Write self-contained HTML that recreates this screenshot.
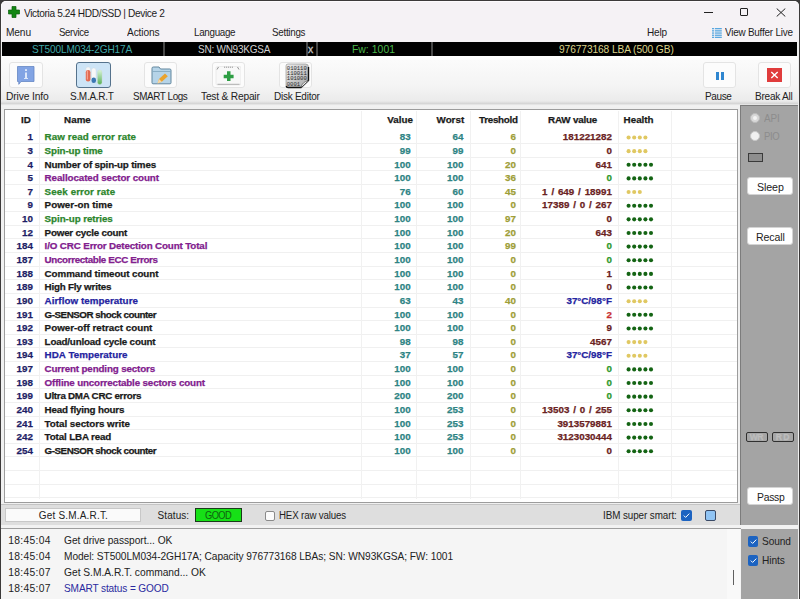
<!DOCTYPE html>
<html><head><meta charset="utf-8">
<style>
*{margin:0;padding:0;box-sizing:border-box}
html,body{width:800px;height:599px;overflow:hidden;background:#3c3a3a}
body{position:relative;font-family:"Liberation Sans",sans-serif;color:#1a1a1a}
.a{position:absolute}
.t{position:absolute;white-space:pre;line-height:1}
.tb{-webkit-text-stroke:0.25px currentColor}
#win{position:absolute;left:1px;top:1px;width:797.5px;height:598px;background:#f0f0f0;border-radius:5px 5px 0 0;overflow:hidden}
#title{position:absolute;left:1px;top:1px;width:797.5px;height:41px;background:#f5f2f5;border-radius:5px 5px 0 0;border-top:1px solid #fdfbfd;border-left:1px solid #fbf9fb}
#bar{position:absolute;left:2px;top:42px;width:795px;height:14px;background:#000}
.sep{position:absolute;top:42px;width:2px;height:14px;background:#474747}
#tb{position:absolute;left:1px;top:56px;width:797px;height:51px;background:linear-gradient(#ffffff 0,#fbfbfb 4px,#f4f4f4 30px,#ebebeb 45px,#d6d6d6 47.5px,#d9d9d9 48px,#efefef 49px,#f2f2f2 51px)}
.btn{position:absolute;top:62px;height:26px;background:#fcfcfc;border:1px solid #e4e4e4;border-radius:3px}
#mid{position:absolute;left:1px;top:107px;width:740px;height:400px;background:#f0f0f0}
#tbl{position:absolute;left:4px;top:109px;width:734px;height:394px;background:#fff;border:1px solid #9c9c9c}
.hl{left:5px;width:732px;height:1px;background:#f0f0f0}
.vl{top:111px;width:1px;height:388px;background:#f1f1f1}
.dots{position:absolute;left:625px;height:4px;line-height:0;font-size:0}
.dot{display:inline-block;width:3.7px;height:3.7px;border-radius:50%;margin-right:1.8px;vertical-align:top}
.y .dot{background:#ebcf6c}
.gd .dot{background:#116611}
#rp{position:absolute;left:740px;top:105px;width:57.5px;height:420px;background:#a4a4a4;border-left:1px solid #7c7c7c;border-top:1px solid #7c7c7c}
#rp2{position:absolute;left:740px;top:529px;width:57.5px;height:70px;background:#a4a4a4;border-left:1px solid #7c7c7c}
.wb{position:absolute;left:747px;width:45.5px;height:18px;background:#fff;border:1px solid #d4d4d4;border-radius:3px}
#sb{position:absolute;left:1px;top:504px;width:739px;height:21px;background:#dedede;border-top:1px solid #c4c4c4}
#sep2{position:absolute;left:1px;top:525px;width:797px;height:4px;background:#f2f2f2}
#log{position:absolute;left:1px;top:528px;width:740px;height:71px;background:#f5f5f5;border-top:1px solid #9e9e9e}
.cb{position:absolute;width:10.5px;height:10.5px;border-radius:2px;background:#1c63c1}
</style></head><body>
<div id="win"></div>
<div id="title"></div>
<!-- title bar icons -->
<svg class="a" style="left:8px;top:6px" width="12" height="12" viewBox="0 0 12 12"><path d="M4 0.5H8V4H11.5V8H8V11.5H4V8H0.5V4H4Z" fill="#138613" stroke="#0b5e0b" stroke-width="0.7" stroke-linejoin="round"/></svg>
<div class="a" style="left:703.5px;top:12px;width:9px;height:1px;background:#222"></div>
<div class="a" style="left:740px;top:8px;width:8px;height:8px;border:1px solid #222;border-radius:1px"></div>
<svg class="a" style="left:776px;top:8px" width="10" height="9" viewBox="0 0 10 9"><path d="M0.7 0.5L9.3 8.5M9.3 0.5L0.7 8.5" stroke="#222" stroke-width="1"/></svg>
<!-- view buffer icon -->
<svg class="a" style="left:712px;top:28px" width="10" height="10" viewBox="0 0 10 10"><g fill="#5aa8e0"><rect x="0" y="0" width="2" height="1.3"/><rect x="2.8" y="0" width="7" height="1.3"/><rect x="0" y="2.2" width="2" height="1.3"/><rect x="2.8" y="2.2" width="7" height="1.3"/><rect x="0" y="4.4" width="2" height="1.3"/><rect x="2.8" y="4.4" width="7" height="1.3"/><rect x="0" y="6.6" width="2" height="1.3"/><rect x="2.8" y="6.6" width="7" height="1.3"/><rect x="0" y="8.7" width="2" height="1.3"/><rect x="2.8" y="8.7" width="7" height="1.3"/></g></svg>
<div id="bar"></div>
<div class="sep" style="left:162.5px"></div>
<div class="sep" style="left:305.5px"></div>
<div class="sep" style="left:315.5px"></div>
<div class="sep" style="left:430.5px"></div>
<div id="tb"></div>
<!-- toolbar buttons -->
<div class="btn" style="left:9px;width:34px"></div>
<div class="btn" style="left:76px;width:35px;top:62px;height:26px;background:#cde4f6;border:1.2px solid #55728c"></div>
<div class="btn" style="left:144px;width:33px"></div>
<div class="btn" style="left:211.5px;width:33.5px"></div>
<div class="btn" style="left:279px;width:33px"></div>
<div class="btn" style="left:703px;width:33px"></div>
<div class="btn" style="left:757.5px;width:33px"></div>
<!-- drive info icon -->
<svg class="a" style="left:17px;top:66px" width="18" height="19" viewBox="0 0 18 19"><path d="M0.5 0.5H17V15.5H4L1.8 18.3V15.5H0.5Z" fill="#82a4e4" stroke="#6486c4" stroke-width="0.8"/><rect x="8" y="3.2" width="2" height="1.8" fill="#dde8fa"/><path d="M8 6.5H10V12H11V13H7V12H8Z" fill="#dde8fa"/></svg>
<!-- smart icon -->
<svg class="a" style="left:84px;top:65px" width="20" height="21" viewBox="0 0 20 21"><defs><linearGradient id="gg" x1="0" y1="0" x2="0" y2="1"><stop offset="0" stop-color="#d8f4d8"/><stop offset="1" stop-color="#58b058"/></linearGradient></defs>
<rect x="1.8" y="2" width="4.6" height="14.5" rx="2.2" fill="#f6f6f6" stroke="#d0d8e0" stroke-width="0.4"/><rect x="1.8" y="5" width="4.6" height="11.5" rx="2.2" fill="#e26a52"/><rect x="2.8" y="5.5" width="1.2" height="9" fill="#f4a08c"/>
<rect x="7.5" y="3" width="4.5" height="15" rx="2.2" fill="#f8f8f8" stroke="#d0d8e0" stroke-width="0.4"/><rect x="7.5" y="12.5" width="4.5" height="5.5" rx="2.2" fill="#3a78b4"/>
<rect x="13.5" y="5" width="4.5" height="14.5" rx="2.2" fill="url(#gg)" stroke="#c8dcc8" stroke-width="0.4"/></svg>
<!-- smart logs icon -->
<svg class="a" style="left:151px;top:66px" width="21" height="19" viewBox="0 0 21 19"><path d="M1 2.3Q1 1 2.3 1H8L9.5 3H18.8Q20 3 20 4.2V16.8Q20 17.8 19 17.8H2Q1 17.8 1 16.8Z" fill="#b6d4e8" stroke="#62879e" stroke-width="1"/><path d="M1.5 5.5H19.5" stroke="#7fa6bc" stroke-width="0.8"/><path d="M6.5 17.5L8 13L14 7.5L16.8 10.2L10.8 15.8Z" fill="#eaa32e"/><path d="M6.5 17.5L8 13L10.8 15.8Z" fill="#f6d8a8"/></svg>
<!-- test & repair icon -->
<svg class="a" style="left:215px;top:65px" width="26" height="21" viewBox="0 0 26 21"><rect x="1" y="1.5" width="25" height="18.5" rx="1.5" fill="#f8f8f8" stroke="#e0e0e0" stroke-width="0.6"/><path d="M2.5 19.3H24.5" stroke="#a8a8a8" stroke-width="0.9"/><path d="M2 4.5L3.5 2M22.5 2L24 4.5" stroke="#777" stroke-width="0.8" fill="none"/><path d="M9 2.2H18" stroke="#8a8a8a" stroke-width="0.9" stroke-dasharray="1.2 0.8"/><path d="M12 6.3H15.5V9.8H18.6V13.3H15.5V16H12V13.3H8.7V9.8H12Z" fill="#2e9e44"/></svg>
<!-- disk editor icon -->
<svg class="a" style="left:285px;top:63px" width="25" height="26" viewBox="0 0 25 26"><defs><linearGradient id="dg" x1="0" y1="0" x2="1" y2="1"><stop offset="0" stop-color="#ededed"/><stop offset="1" stop-color="#a8a8a8"/></linearGradient></defs><path d="M3 1H20.5Q23.5 1 23.5 4V17.5L16 24.5H3Q1 24.5 1 22.5V3Q1 1 3 1Z" fill="url(#dg)" stroke="#8a8a8a" stroke-width="0.6"/><path d="M23.5 4V17.5L16 24.5H3Q1.5 24.5 1.2 23" fill="none" stroke="#111" stroke-width="1.4"/><path d="M16 24.5Q17 19 23.5 17.5" fill="#f2f2f2" stroke="#444" stroke-width="0.6"/><g font-family="Liberation Mono" font-size="5.9" fill="#2a2a2a" textLength="19"><text x="1.8" y="6.6" textLength="20" lengthAdjust="spacingAndGlyphs">010110</text><text x="1.8" y="12" textLength="20" lengthAdjust="spacingAndGlyphs">110011</text><text x="1.8" y="17.4" textLength="20" lengthAdjust="spacingAndGlyphs">101000</text><text x="1.8" y="22.8" textLength="13.3" lengthAdjust="spacingAndGlyphs">0001</text></g></svg>
<!-- pause icon -->
<div class="a" style="left:716px;top:72px;width:3px;height:8px;background:#2f86d0"></div>
<div class="a" style="left:721px;top:72px;width:3px;height:8px;background:#2f86d0"></div>
<!-- break all icon -->
<div class="a" style="left:767px;top:68px;width:14.5px;height:14px;background:#e03c3c"></div>
<svg class="a" style="left:767px;top:68px" width="15" height="14" viewBox="0 0 15 14"><path d="M4.3 4L10.7 10M10.7 4L4.3 10" stroke="#fff" stroke-width="1.4"/></svg>

<div id="mid"></div>
<div id="tbl"></div>
<div class="a hl" style="top:143.00px"></div>
<div class="a hl" style="top:156.63px"></div>
<div class="a hl" style="top:170.26px"></div>
<div class="a hl" style="top:183.89px"></div>
<div class="a hl" style="top:197.52px"></div>
<div class="a hl" style="top:211.15px"></div>
<div class="a hl" style="top:224.78px"></div>
<div class="a hl" style="top:238.41px"></div>
<div class="a hl" style="top:252.04px"></div>
<div class="a hl" style="top:265.67px"></div>
<div class="a hl" style="top:279.30px"></div>
<div class="a hl" style="top:292.93px"></div>
<div class="a hl" style="top:306.56px"></div>
<div class="a hl" style="top:320.19px"></div>
<div class="a hl" style="top:333.82px"></div>
<div class="a hl" style="top:347.45px"></div>
<div class="a hl" style="top:361.08px"></div>
<div class="a hl" style="top:374.71px"></div>
<div class="a hl" style="top:388.34px"></div>
<div class="a hl" style="top:401.97px"></div>
<div class="a hl" style="top:415.60px"></div>
<div class="a hl" style="top:429.23px"></div>
<div class="a hl" style="top:442.86px"></div>
<div class="a hl" style="top:456.49px"></div>
<div class="a hl" style="top:470.12px"></div>
<div class="a hl" style="top:483.75px"></div>
<div class="a hl" style="top:497.38px"></div>
<div class="a vl" style="left:39.4px"></div>
<div class="a vl" style="left:360.6px"></div>
<div class="a vl" style="left:416.0px"></div>
<div class="a vl" style="left:470.0px"></div>
<div class="a vl" style="left:520.0px"></div>
<div class="a vl" style="left:618.3px"></div>
<div class="a vl" style="left:670.5px"></div>
<svg class="a" style="left:0;top:0" width="800" height="599">
<circle cx="628.60" cy="137.50" r="2.05" fill="#e0c862"/>
<circle cx="634.20" cy="137.50" r="2.05" fill="#e0c862"/>
<circle cx="639.80" cy="137.50" r="2.05" fill="#e0c862"/>
<circle cx="645.40" cy="137.50" r="2.05" fill="#e0c862"/>
<circle cx="628.60" cy="151.14" r="2.05" fill="#e0c862"/>
<circle cx="634.20" cy="151.14" r="2.05" fill="#e0c862"/>
<circle cx="639.80" cy="151.14" r="2.05" fill="#e0c862"/>
<circle cx="645.40" cy="151.14" r="2.05" fill="#e0c862"/>
<circle cx="628.60" cy="164.78" r="2.05" fill="#146414"/>
<circle cx="634.20" cy="164.78" r="2.05" fill="#146414"/>
<circle cx="639.80" cy="164.78" r="2.05" fill="#146414"/>
<circle cx="645.40" cy="164.78" r="2.05" fill="#146414"/>
<circle cx="651.00" cy="164.78" r="2.05" fill="#146414"/>
<circle cx="628.60" cy="178.42" r="2.05" fill="#146414"/>
<circle cx="634.20" cy="178.42" r="2.05" fill="#146414"/>
<circle cx="639.80" cy="178.42" r="2.05" fill="#146414"/>
<circle cx="645.40" cy="178.42" r="2.05" fill="#146414"/>
<circle cx="651.00" cy="178.42" r="2.05" fill="#146414"/>
<circle cx="628.60" cy="192.06" r="2.05" fill="#e0c862"/>
<circle cx="634.20" cy="192.06" r="2.05" fill="#e0c862"/>
<circle cx="639.80" cy="192.06" r="2.05" fill="#e0c862"/>
<circle cx="628.60" cy="205.70" r="2.05" fill="#146414"/>
<circle cx="634.20" cy="205.70" r="2.05" fill="#146414"/>
<circle cx="639.80" cy="205.70" r="2.05" fill="#146414"/>
<circle cx="645.40" cy="205.70" r="2.05" fill="#146414"/>
<circle cx="651.00" cy="205.70" r="2.05" fill="#146414"/>
<circle cx="628.60" cy="219.34" r="2.05" fill="#146414"/>
<circle cx="634.20" cy="219.34" r="2.05" fill="#146414"/>
<circle cx="639.80" cy="219.34" r="2.05" fill="#146414"/>
<circle cx="645.40" cy="219.34" r="2.05" fill="#146414"/>
<circle cx="651.00" cy="219.34" r="2.05" fill="#146414"/>
<circle cx="628.60" cy="232.98" r="2.05" fill="#146414"/>
<circle cx="634.20" cy="232.98" r="2.05" fill="#146414"/>
<circle cx="639.80" cy="232.98" r="2.05" fill="#146414"/>
<circle cx="645.40" cy="232.98" r="2.05" fill="#146414"/>
<circle cx="651.00" cy="232.98" r="2.05" fill="#146414"/>
<circle cx="628.60" cy="246.62" r="2.05" fill="#146414"/>
<circle cx="634.20" cy="246.62" r="2.05" fill="#146414"/>
<circle cx="639.80" cy="246.62" r="2.05" fill="#146414"/>
<circle cx="645.40" cy="246.62" r="2.05" fill="#146414"/>
<circle cx="651.00" cy="246.62" r="2.05" fill="#146414"/>
<circle cx="628.60" cy="260.26" r="2.05" fill="#146414"/>
<circle cx="634.20" cy="260.26" r="2.05" fill="#146414"/>
<circle cx="639.80" cy="260.26" r="2.05" fill="#146414"/>
<circle cx="645.40" cy="260.26" r="2.05" fill="#146414"/>
<circle cx="651.00" cy="260.26" r="2.05" fill="#146414"/>
<circle cx="628.60" cy="273.90" r="2.05" fill="#146414"/>
<circle cx="634.20" cy="273.90" r="2.05" fill="#146414"/>
<circle cx="639.80" cy="273.90" r="2.05" fill="#146414"/>
<circle cx="645.40" cy="273.90" r="2.05" fill="#146414"/>
<circle cx="651.00" cy="273.90" r="2.05" fill="#146414"/>
<circle cx="628.60" cy="287.54" r="2.05" fill="#146414"/>
<circle cx="634.20" cy="287.54" r="2.05" fill="#146414"/>
<circle cx="639.80" cy="287.54" r="2.05" fill="#146414"/>
<circle cx="645.40" cy="287.54" r="2.05" fill="#146414"/>
<circle cx="651.00" cy="287.54" r="2.05" fill="#146414"/>
<circle cx="628.60" cy="301.18" r="2.05" fill="#e0c862"/>
<circle cx="634.20" cy="301.18" r="2.05" fill="#e0c862"/>
<circle cx="639.80" cy="301.18" r="2.05" fill="#e0c862"/>
<circle cx="645.40" cy="301.18" r="2.05" fill="#e0c862"/>
<circle cx="628.60" cy="314.82" r="2.05" fill="#146414"/>
<circle cx="634.20" cy="314.82" r="2.05" fill="#146414"/>
<circle cx="639.80" cy="314.82" r="2.05" fill="#146414"/>
<circle cx="645.40" cy="314.82" r="2.05" fill="#146414"/>
<circle cx="651.00" cy="314.82" r="2.05" fill="#146414"/>
<circle cx="628.60" cy="328.46" r="2.05" fill="#146414"/>
<circle cx="634.20" cy="328.46" r="2.05" fill="#146414"/>
<circle cx="639.80" cy="328.46" r="2.05" fill="#146414"/>
<circle cx="645.40" cy="328.46" r="2.05" fill="#146414"/>
<circle cx="651.00" cy="328.46" r="2.05" fill="#146414"/>
<circle cx="628.60" cy="342.10" r="2.05" fill="#e0c862"/>
<circle cx="634.20" cy="342.10" r="2.05" fill="#e0c862"/>
<circle cx="639.80" cy="342.10" r="2.05" fill="#e0c862"/>
<circle cx="645.40" cy="342.10" r="2.05" fill="#e0c862"/>
<circle cx="628.60" cy="355.74" r="2.05" fill="#e0c862"/>
<circle cx="634.20" cy="355.74" r="2.05" fill="#e0c862"/>
<circle cx="639.80" cy="355.74" r="2.05" fill="#e0c862"/>
<circle cx="645.40" cy="355.74" r="2.05" fill="#e0c862"/>
<circle cx="628.60" cy="369.38" r="2.05" fill="#146414"/>
<circle cx="634.20" cy="369.38" r="2.05" fill="#146414"/>
<circle cx="639.80" cy="369.38" r="2.05" fill="#146414"/>
<circle cx="645.40" cy="369.38" r="2.05" fill="#146414"/>
<circle cx="651.00" cy="369.38" r="2.05" fill="#146414"/>
<circle cx="628.60" cy="383.02" r="2.05" fill="#146414"/>
<circle cx="634.20" cy="383.02" r="2.05" fill="#146414"/>
<circle cx="639.80" cy="383.02" r="2.05" fill="#146414"/>
<circle cx="645.40" cy="383.02" r="2.05" fill="#146414"/>
<circle cx="651.00" cy="383.02" r="2.05" fill="#146414"/>
<circle cx="628.60" cy="396.66" r="2.05" fill="#146414"/>
<circle cx="634.20" cy="396.66" r="2.05" fill="#146414"/>
<circle cx="639.80" cy="396.66" r="2.05" fill="#146414"/>
<circle cx="645.40" cy="396.66" r="2.05" fill="#146414"/>
<circle cx="651.00" cy="396.66" r="2.05" fill="#146414"/>
<circle cx="628.60" cy="410.30" r="2.05" fill="#146414"/>
<circle cx="634.20" cy="410.30" r="2.05" fill="#146414"/>
<circle cx="639.80" cy="410.30" r="2.05" fill="#146414"/>
<circle cx="645.40" cy="410.30" r="2.05" fill="#146414"/>
<circle cx="651.00" cy="410.30" r="2.05" fill="#146414"/>
<circle cx="628.60" cy="423.94" r="2.05" fill="#146414"/>
<circle cx="634.20" cy="423.94" r="2.05" fill="#146414"/>
<circle cx="639.80" cy="423.94" r="2.05" fill="#146414"/>
<circle cx="645.40" cy="423.94" r="2.05" fill="#146414"/>
<circle cx="651.00" cy="423.94" r="2.05" fill="#146414"/>
<circle cx="628.60" cy="437.58" r="2.05" fill="#146414"/>
<circle cx="634.20" cy="437.58" r="2.05" fill="#146414"/>
<circle cx="639.80" cy="437.58" r="2.05" fill="#146414"/>
<circle cx="645.40" cy="437.58" r="2.05" fill="#146414"/>
<circle cx="651.00" cy="437.58" r="2.05" fill="#146414"/>
<circle cx="628.60" cy="451.22" r="2.05" fill="#146414"/>
<circle cx="634.20" cy="451.22" r="2.05" fill="#146414"/>
<circle cx="639.80" cy="451.22" r="2.05" fill="#146414"/>
<circle cx="645.40" cy="451.22" r="2.05" fill="#146414"/>
<circle cx="651.00" cy="451.22" r="2.05" fill="#146414"/>
</svg>
<div id="rp"></div>
<div id="rp2"></div>
<div class="a" style="left:797.5px;top:104px;width:1.2px;height:495px;background:#efefef"></div>
<!-- right panel controls -->
<div class="a" style="left:750px;top:113px;width:10px;height:10px;border-radius:50%;background:#d8d8d8;border:1px solid #bcbcbc"></div>
<div class="a" style="left:753px;top:116px;width:4px;height:4px;border-radius:50%;background:#f4f4f4"></div>
<div class="a" style="left:750px;top:131px;width:10px;height:10px;border-radius:50%;background:#f0f0f0;border:1px solid #c8c8c8"></div>
<div class="a" style="left:748px;top:153px;width:15px;height:8.5px;background:#8e8e8e;border:1px solid #3a3a3a"></div>
<div class="wb" style="top:177.3px"></div>
<div class="wb" style="top:227.3px"></div>
<div class="wb" style="top:487.3px"></div>
<div class="a" style="left:745.8px;top:432.2px;width:22px;height:9.8px;background:#a6a6a6;border:1px solid #303030;border-radius:2px"></div>
<div class="a" style="left:772px;top:432.2px;width:22px;height:9.8px;background:#a6a6a6;border:1px solid #303030;border-radius:2px"></div>
<div id="sb"></div>
<div id="sep2"></div>
<div class="a" style="left:5px;top:508px;width:136px;height:14px;background:#fafafa;border:1px solid #c8c8c8"></div>
<div class="a" style="left:195px;top:508px;width:47px;height:13.6px;background:#16e016;border:1px solid #1a3a1a"></div>
<div class="a" style="left:265px;top:511px;width:10px;height:9.5px;background:#fbfbfb;border:1px solid #8a8a8a;border-radius:2px"></div>
<div class="cb" style="left:681px;top:510px;"></div>
<svg class="a" style="left:681px;top:510px" width="11" height="11" viewBox="0 0 11 11"><path d="M2.8 5.6L4.6 7.4L8.3 3.6" stroke="#fff" stroke-width="1" fill="none"/></svg>
<div class="a" style="left:705px;top:510px;width:11px;height:10.5px;background:#90c4f4;border:1px solid #3a4a66;border-radius:2px"></div>
<div id="log"></div>
<div class="a" style="left:727px;top:529px;width:13px;height:70px;background:#f9f9f9"></div>
<div class="a" style="left:732.5px;top:570px;width:1.2px;height:15px;background:#606060"></div>
<div class="cb" style="left:747.5px;top:536px;"></div>
<svg class="a" style="left:747.5px;top:536px" width="11" height="11" viewBox="0 0 11 11"><path d="M2.8 5.6L4.6 7.4L8.3 3.6" stroke="#fff" stroke-width="1" fill="none"/></svg>
<div class="cb" style="left:747.5px;top:555px;"></div>
<svg class="a" style="left:747.5px;top:555px" width="11" height="11" viewBox="0 0 11 11"><path d="M2.8 5.6L4.6 7.4L8.3 3.6" stroke="#fff" stroke-width="1" fill="none"/></svg>
<div class="a" style="left:0;top:0;width:1px;height:599px;background:#3c3a3a"></div>
<div class="t" style="top:7.57px;font-size:11.0px;color:#1c1c1c;letter-spacing:-0.392px;transform:scaleX(0.9202);transform-origin:0 0;left:24.36px;">Victoria 5.24 HDD/SSD | Device 2</div>
<div class="t" style="top:27.65px;font-size:10.4px;color:#1c1c1c;letter-spacing:-0.153px;transform:scaleX(0.9814);transform-origin:0 0;left:6.33px;">Menu</div>
<div class="t" style="top:27.65px;font-size:10.4px;color:#1c1c1c;letter-spacing:-0.377px;transform:scaleX(0.9283);transform-origin:0 0;left:59.28px;">Service</div>
<div class="t" style="top:27.65px;font-size:10.4px;color:#1c1c1c;letter-spacing:-0.121px;transform:scaleX(0.9778);transform-origin:0 0;left:126.58px;">Actions</div>
<div class="t" style="top:27.65px;font-size:10.4px;color:#1c1c1c;letter-spacing:-0.329px;transform:scaleX(0.9466);transform-origin:0 0;left:194.48px;">Language</div>
<div class="t" style="top:27.65px;font-size:10.4px;color:#1c1c1c;letter-spacing:-0.287px;transform:scaleX(0.9422);transform-origin:0 0;left:271.58px;">Settings</div>
<div class="t" style="top:27.65px;font-size:10.4px;color:#1c1c1c;letter-spacing:-0.224px;transform:scaleX(0.9662);transform-origin:0 0;left:646.58px;">Help</div>
<div class="t" style="top:27.65px;font-size:10.4px;color:#1c1c1c;letter-spacing:-0.226px;transform:scaleX(0.9520);transform-origin:0 0;left:725.28px;">View Buffer Live</div>
<div class="t" style="top:45.05px;font-size:10.4px;color:#3fa6a6;letter-spacing:-0.171px;transform:scaleX(0.9732);transform-origin:0 0;left:31.88px;">ST500LM034-2GH17A</div>
<div class="t" style="top:45.05px;font-size:10.4px;color:#d2d2d2;letter-spacing:-0.256px;transform:scaleX(0.9622);transform-origin:0 0;left:198.28px;">SN: WN93KGSA</div>
<div class="t" style="top:44.65px;font-size:10.4px;color:#c8c8c8;-webkit-text-stroke:0.3px #c8c8c8;left:308.08px;">x</div>
<div class="t" style="top:45.05px;font-size:10.4px;color:#4ab84a;letter-spacing:0.069px;left:351.88px;">Fw: 1001</div>
<div class="t" style="top:45.05px;font-size:10.4px;color:#dcd48a;letter-spacing:-0.100px;transform:scaleX(0.9820);transform-origin:0 0;left:558.58px;">976773168 LBA (500 GB)</div>
<div class="t" style="top:90.62px;font-size:10.6px;color:#222;letter-spacing:-0.139px;transform:scaleX(0.9711);transform-origin:0 0;left:5.58px;">Drive Info</div>
<div class="t" style="top:90.62px;font-size:10.6px;color:#222;letter-spacing:-0.313px;transform:scaleX(0.9449);transform-origin:0 0;left:69.58px;">S.M.A.R.T</div>
<div class="t" style="top:90.62px;font-size:10.6px;color:#222;letter-spacing:-0.432px;transform:scaleX(0.9328);transform-origin:0 0;left:132.58px;">SMART Logs</div>
<div class="t" style="top:90.62px;font-size:10.6px;color:#222;letter-spacing:-0.198px;transform:scaleX(0.9607);transform-origin:0 0;left:200.58px;">Test &amp; Repair</div>
<div class="t" style="top:90.62px;font-size:10.6px;color:#222;letter-spacing:-0.269px;transform:scaleX(0.9437);transform-origin:0 0;left:273.58px;">Disk Editor</div>
<div class="t" style="top:90.62px;font-size:10.6px;color:#222;letter-spacing:-0.400px;transform:scaleX(0.9420);transform-origin:0 0;left:704.58px;">Pause</div>
<div class="t" style="top:90.62px;font-size:10.6px;color:#222;letter-spacing:-0.248px;transform:scaleX(0.9491);transform-origin:0 0;left:754.58px;">Break All</div>
<div class="t tb" style="top:115.33px;font-size:9.8px;color:#1a1a1a;font-weight:bold;right:769.11px;">ID</div>
<div class="t tb" style="top:115.33px;font-size:9.8px;color:#1a1a1a;font-weight:bold;left:64.11px;">Name</div>
<div class="t tb" style="top:115.33px;font-size:9.8px;color:#1a1a1a;font-weight:bold;right:387.11px;">Value</div>
<div class="t tb" style="top:115.33px;font-size:9.8px;color:#1a1a1a;font-weight:bold;right:335.86px;">Worst</div>
<div class="t tb" style="top:115.33px;font-size:9.8px;color:#1a1a1a;font-weight:bold;letter-spacing:-0.280px;right:282.39px;">Treshold</div>
<div class="t tb" style="top:115.33px;font-size:9.8px;color:#1a1a1a;font-weight:bold;letter-spacing:-0.200px;left:548.11px;">RAW value</div>
<div class="t tb" style="top:115.33px;font-size:9.8px;color:#1a1a1a;font-weight:bold;left:623.61px;">Health</div>
<div class="t tb" style="top:132.23px;font-size:9.8px;color:#1e1e66;font-weight:bold;right:767.11px;">1</div>
<div class="t tb" style="top:132.23px;font-size:9.8px;color:#2c862c;font-weight:bold;letter-spacing:0.089px;left:44.61px;">Raw read error rate</div>
<div class="t tb" style="top:132.23px;font-size:9.8px;color:#2e8484;font-weight:bold;right:389.41px;">83</div>
<div class="t tb" style="top:132.23px;font-size:9.8px;color:#2e8484;font-weight:bold;right:336.61px;">64</div>
<div class="t tb" style="top:132.23px;font-size:9.8px;color:#9e9e38;font-weight:bold;right:284.11px;">6</div>
<div class="t tb" style="top:132.23px;font-size:9.8px;color:#6a2222;font-weight:bold;right:188.11px;">181221282</div>
<div class="t tb" style="top:145.87px;font-size:9.8px;color:#1e1e66;font-weight:bold;right:767.11px;">3</div>
<div class="t tb" style="top:145.87px;font-size:9.8px;color:#2c862c;font-weight:bold;letter-spacing:-0.109px;left:44.61px;">Spin-up time</div>
<div class="t tb" style="top:145.87px;font-size:9.8px;color:#2e8484;font-weight:bold;right:389.41px;">99</div>
<div class="t tb" style="top:145.87px;font-size:9.8px;color:#2e8484;font-weight:bold;right:336.61px;">99</div>
<div class="t tb" style="top:145.87px;font-size:9.8px;color:#9e9e38;font-weight:bold;right:284.11px;">0</div>
<div class="t tb" style="top:145.87px;font-size:9.8px;color:#6a2222;font-weight:bold;right:188.11px;">0</div>
<div class="t tb" style="top:159.51px;font-size:9.8px;color:#1e1e66;font-weight:bold;right:767.11px;">4</div>
<div class="t tb" style="top:159.51px;font-size:9.8px;color:#1a1a1a;font-weight:bold;letter-spacing:-0.177px;left:44.61px;">Number of spin-up times</div>
<div class="t tb" style="top:159.51px;font-size:9.8px;color:#2e8484;font-weight:bold;right:389.41px;">100</div>
<div class="t tb" style="top:159.51px;font-size:9.8px;color:#2e8484;font-weight:bold;right:336.61px;">100</div>
<div class="t tb" style="top:159.51px;font-size:9.8px;color:#9e9e38;font-weight:bold;right:284.11px;">20</div>
<div class="t tb" style="top:159.51px;font-size:9.8px;color:#6a2222;font-weight:bold;right:188.11px;">641</div>
<div class="t tb" style="top:173.15px;font-size:9.8px;color:#1e1e66;font-weight:bold;right:767.11px;">5</div>
<div class="t tb" style="top:173.15px;font-size:9.8px;color:#82208e;font-weight:bold;letter-spacing:-0.091px;left:44.61px;">Reallocated sector count</div>
<div class="t tb" style="top:173.15px;font-size:9.8px;color:#2e8484;font-weight:bold;right:389.41px;">100</div>
<div class="t tb" style="top:173.15px;font-size:9.8px;color:#2e8484;font-weight:bold;right:336.61px;">100</div>
<div class="t tb" style="top:173.15px;font-size:9.8px;color:#9e9e38;font-weight:bold;right:284.11px;">36</div>
<div class="t tb" style="top:173.15px;font-size:9.8px;color:#2f9a2f;font-weight:bold;right:188.11px;">0</div>
<div class="t tb" style="top:186.79px;font-size:9.8px;color:#1e1e66;font-weight:bold;right:767.11px;">7</div>
<div class="t tb" style="top:186.79px;font-size:9.8px;color:#2c862c;font-weight:bold;letter-spacing:0.093px;left:44.61px;">Seek error rate</div>
<div class="t tb" style="top:186.79px;font-size:9.8px;color:#2e8484;font-weight:bold;right:389.41px;">76</div>
<div class="t tb" style="top:186.79px;font-size:9.8px;color:#2e8484;font-weight:bold;right:336.61px;">60</div>
<div class="t tb" style="top:186.79px;font-size:9.8px;color:#9e9e38;font-weight:bold;right:284.11px;">45</div>
<div class="t tb" style="top:186.79px;font-size:9.8px;color:#6a2222;font-weight:bold;word-spacing:1.1px;right:188.11px;">1 / 649 / 18991</div>
<div class="t tb" style="top:200.43px;font-size:9.8px;color:#1e1e66;font-weight:bold;right:767.11px;">9</div>
<div class="t tb" style="top:200.43px;font-size:9.8px;color:#1a1a1a;font-weight:bold;letter-spacing:0.033px;left:44.61px;">Power-on time</div>
<div class="t tb" style="top:200.43px;font-size:9.8px;color:#2e8484;font-weight:bold;right:389.41px;">100</div>
<div class="t tb" style="top:200.43px;font-size:9.8px;color:#2e8484;font-weight:bold;right:336.61px;">100</div>
<div class="t tb" style="top:200.43px;font-size:9.8px;color:#9e9e38;font-weight:bold;right:284.11px;">0</div>
<div class="t tb" style="top:200.43px;font-size:9.8px;color:#6a2222;font-weight:bold;word-spacing:1.1px;right:188.11px;">17389 / 0 / 267</div>
<div class="t tb" style="top:214.07px;font-size:9.8px;color:#1e1e66;font-weight:bold;right:767.11px;">10</div>
<div class="t tb" style="top:214.07px;font-size:9.8px;color:#2c862c;font-weight:bold;letter-spacing:-0.071px;left:44.61px;">Spin-up retries</div>
<div class="t tb" style="top:214.07px;font-size:9.8px;color:#2e8484;font-weight:bold;right:389.41px;">100</div>
<div class="t tb" style="top:214.07px;font-size:9.8px;color:#2e8484;font-weight:bold;right:336.61px;">100</div>
<div class="t tb" style="top:214.07px;font-size:9.8px;color:#9e9e38;font-weight:bold;right:284.11px;">97</div>
<div class="t tb" style="top:214.07px;font-size:9.8px;color:#6a2222;font-weight:bold;right:188.11px;">0</div>
<div class="t tb" style="top:227.71px;font-size:9.8px;color:#1e1e66;font-weight:bold;right:767.11px;">12</div>
<div class="t tb" style="top:227.71px;font-size:9.8px;color:#1a1a1a;font-weight:bold;letter-spacing:-0.206px;left:44.61px;">Power cycle count</div>
<div class="t tb" style="top:227.71px;font-size:9.8px;color:#2e8484;font-weight:bold;right:389.41px;">100</div>
<div class="t tb" style="top:227.71px;font-size:9.8px;color:#2e8484;font-weight:bold;right:336.61px;">100</div>
<div class="t tb" style="top:227.71px;font-size:9.8px;color:#9e9e38;font-weight:bold;right:284.11px;">20</div>
<div class="t tb" style="top:227.71px;font-size:9.8px;color:#6a2222;font-weight:bold;right:188.11px;">643</div>
<div class="t tb" style="top:241.35px;font-size:9.8px;color:#1e1e66;font-weight:bold;right:767.11px;">184</div>
<div class="t tb" style="top:241.35px;font-size:9.8px;color:#82208e;font-weight:bold;letter-spacing:-0.138px;left:44.61px;">I/O CRC Error Detection Count Total</div>
<div class="t tb" style="top:241.35px;font-size:9.8px;color:#2e8484;font-weight:bold;right:389.41px;">100</div>
<div class="t tb" style="top:241.35px;font-size:9.8px;color:#2e8484;font-weight:bold;right:336.61px;">100</div>
<div class="t tb" style="top:241.35px;font-size:9.8px;color:#9e9e38;font-weight:bold;right:284.11px;">99</div>
<div class="t tb" style="top:241.35px;font-size:9.8px;color:#2f9a2f;font-weight:bold;right:188.11px;">0</div>
<div class="t tb" style="top:254.99px;font-size:9.8px;color:#1e1e66;font-weight:bold;right:767.11px;">187</div>
<div class="t tb" style="top:254.99px;font-size:9.8px;color:#82208e;font-weight:bold;letter-spacing:-0.348px;left:44.61px;">Uncorrectable ECC Errors</div>
<div class="t tb" style="top:254.99px;font-size:9.8px;color:#2e8484;font-weight:bold;right:389.41px;">100</div>
<div class="t tb" style="top:254.99px;font-size:9.8px;color:#2e8484;font-weight:bold;right:336.61px;">100</div>
<div class="t tb" style="top:254.99px;font-size:9.8px;color:#9e9e38;font-weight:bold;right:284.11px;">0</div>
<div class="t tb" style="top:254.99px;font-size:9.8px;color:#2f9a2f;font-weight:bold;right:188.11px;">0</div>
<div class="t tb" style="top:268.63px;font-size:9.8px;color:#1e1e66;font-weight:bold;right:767.11px;">188</div>
<div class="t tb" style="top:268.63px;font-size:9.8px;color:#1a1a1a;font-weight:bold;letter-spacing:-0.080px;left:44.61px;">Command timeout count</div>
<div class="t tb" style="top:268.63px;font-size:9.8px;color:#2e8484;font-weight:bold;right:389.41px;">100</div>
<div class="t tb" style="top:268.63px;font-size:9.8px;color:#2e8484;font-weight:bold;right:336.61px;">100</div>
<div class="t tb" style="top:268.63px;font-size:9.8px;color:#9e9e38;font-weight:bold;right:284.11px;">0</div>
<div class="t tb" style="top:268.63px;font-size:9.8px;color:#6a2222;font-weight:bold;right:188.11px;">1</div>
<div class="t tb" style="top:282.27px;font-size:9.8px;color:#1e1e66;font-weight:bold;right:767.11px;">189</div>
<div class="t tb" style="top:282.27px;font-size:9.8px;color:#1a1a1a;font-weight:bold;letter-spacing:-0.207px;left:44.61px;">High Fly writes</div>
<div class="t tb" style="top:282.27px;font-size:9.8px;color:#2e8484;font-weight:bold;right:389.41px;">100</div>
<div class="t tb" style="top:282.27px;font-size:9.8px;color:#2e8484;font-weight:bold;right:336.61px;">100</div>
<div class="t tb" style="top:282.27px;font-size:9.8px;color:#9e9e38;font-weight:bold;right:284.11px;">0</div>
<div class="t tb" style="top:282.27px;font-size:9.8px;color:#6a2222;font-weight:bold;right:188.11px;">0</div>
<div class="t tb" style="top:295.91px;font-size:9.8px;color:#1e1e66;font-weight:bold;right:767.11px;">190</div>
<div class="t tb" style="top:295.91px;font-size:9.8px;color:#2424a0;font-weight:bold;letter-spacing:0.044px;left:44.61px;">Airflow temperature</div>
<div class="t tb" style="top:295.91px;font-size:9.8px;color:#2e8484;font-weight:bold;right:389.41px;">63</div>
<div class="t tb" style="top:295.91px;font-size:9.8px;color:#2e8484;font-weight:bold;right:336.61px;">43</div>
<div class="t tb" style="top:295.91px;font-size:9.8px;color:#9e9e38;font-weight:bold;right:284.11px;">40</div>
<div class="t tb" style="top:295.91px;font-size:9.8px;color:#2424a0;font-weight:bold;right:188.11px;">37°C/98°F</div>
<div class="t tb" style="top:309.55px;font-size:9.8px;color:#1e1e66;font-weight:bold;right:767.11px;">191</div>
<div class="t tb" style="top:309.55px;font-size:9.8px;color:#1a1a1a;font-weight:bold;letter-spacing:-0.476px;left:44.61px;">G-SENSOR shock counter</div>
<div class="t tb" style="top:309.55px;font-size:9.8px;color:#2e8484;font-weight:bold;right:389.41px;">100</div>
<div class="t tb" style="top:309.55px;font-size:9.8px;color:#2e8484;font-weight:bold;right:336.61px;">100</div>
<div class="t tb" style="top:309.55px;font-size:9.8px;color:#9e9e38;font-weight:bold;right:284.11px;">0</div>
<div class="t tb" style="top:309.55px;font-size:9.8px;color:#c83030;font-weight:bold;right:188.11px;">2</div>
<div class="t tb" style="top:323.19px;font-size:9.8px;color:#1e1e66;font-weight:bold;right:767.11px;">192</div>
<div class="t tb" style="top:323.19px;font-size:9.8px;color:#1a1a1a;font-weight:bold;left:44.61px;">Power-off retract count</div>
<div class="t tb" style="top:323.19px;font-size:9.8px;color:#2e8484;font-weight:bold;right:389.41px;">100</div>
<div class="t tb" style="top:323.19px;font-size:9.8px;color:#2e8484;font-weight:bold;right:336.61px;">100</div>
<div class="t tb" style="top:323.19px;font-size:9.8px;color:#9e9e38;font-weight:bold;right:284.11px;">0</div>
<div class="t tb" style="top:323.19px;font-size:9.8px;color:#6a2222;font-weight:bold;right:188.11px;">9</div>
<div class="t tb" style="top:336.83px;font-size:9.8px;color:#1e1e66;font-weight:bold;right:767.11px;">193</div>
<div class="t tb" style="top:336.83px;font-size:9.8px;color:#1a1a1a;font-weight:bold;letter-spacing:-0.177px;left:44.61px;">Load/unload cycle count</div>
<div class="t tb" style="top:336.83px;font-size:9.8px;color:#2e8484;font-weight:bold;right:389.41px;">98</div>
<div class="t tb" style="top:336.83px;font-size:9.8px;color:#2e8484;font-weight:bold;right:336.61px;">98</div>
<div class="t tb" style="top:336.83px;font-size:9.8px;color:#9e9e38;font-weight:bold;right:284.11px;">0</div>
<div class="t tb" style="top:336.83px;font-size:9.8px;color:#6a2222;font-weight:bold;right:188.11px;">4567</div>
<div class="t tb" style="top:350.47px;font-size:9.8px;color:#1e1e66;font-weight:bold;right:767.11px;">194</div>
<div class="t tb" style="top:350.47px;font-size:9.8px;color:#2424a0;font-weight:bold;letter-spacing:0.050px;left:44.61px;">HDA Temperature</div>
<div class="t tb" style="top:350.47px;font-size:9.8px;color:#2e8484;font-weight:bold;right:389.41px;">37</div>
<div class="t tb" style="top:350.47px;font-size:9.8px;color:#2e8484;font-weight:bold;right:336.61px;">57</div>
<div class="t tb" style="top:350.47px;font-size:9.8px;color:#9e9e38;font-weight:bold;right:284.11px;">0</div>
<div class="t tb" style="top:350.47px;font-size:9.8px;color:#2424a0;font-weight:bold;right:188.11px;">37°C/98°F</div>
<div class="t tb" style="top:364.11px;font-size:9.8px;color:#1e1e66;font-weight:bold;right:767.11px;">197</div>
<div class="t tb" style="top:364.11px;font-size:9.8px;color:#82208e;font-weight:bold;letter-spacing:-0.150px;left:44.61px;">Current pending sectors</div>
<div class="t tb" style="top:364.11px;font-size:9.8px;color:#2e8484;font-weight:bold;right:389.41px;">100</div>
<div class="t tb" style="top:364.11px;font-size:9.8px;color:#2e8484;font-weight:bold;right:336.61px;">100</div>
<div class="t tb" style="top:364.11px;font-size:9.8px;color:#9e9e38;font-weight:bold;right:284.11px;">0</div>
<div class="t tb" style="top:364.11px;font-size:9.8px;color:#2f9a2f;font-weight:bold;right:188.11px;">0</div>
<div class="t tb" style="top:377.75px;font-size:9.8px;color:#1e1e66;font-weight:bold;right:767.11px;">198</div>
<div class="t tb" style="top:377.75px;font-size:9.8px;color:#82208e;font-weight:bold;letter-spacing:-0.150px;left:44.61px;">Offline uncorrectable sectors count</div>
<div class="t tb" style="top:377.75px;font-size:9.8px;color:#2e8484;font-weight:bold;right:389.41px;">100</div>
<div class="t tb" style="top:377.75px;font-size:9.8px;color:#2e8484;font-weight:bold;right:336.61px;">100</div>
<div class="t tb" style="top:377.75px;font-size:9.8px;color:#9e9e38;font-weight:bold;right:284.11px;">0</div>
<div class="t tb" style="top:377.75px;font-size:9.8px;color:#2f9a2f;font-weight:bold;right:188.11px;">0</div>
<div class="t tb" style="top:391.39px;font-size:9.8px;color:#1e1e66;font-weight:bold;right:767.11px;">199</div>
<div class="t tb" style="top:391.39px;font-size:9.8px;color:#1a1a1a;font-weight:bold;letter-spacing:-0.274px;left:44.61px;">Ultra DMA CRC errors</div>
<div class="t tb" style="top:391.39px;font-size:9.8px;color:#2e8484;font-weight:bold;right:389.41px;">200</div>
<div class="t tb" style="top:391.39px;font-size:9.8px;color:#2e8484;font-weight:bold;right:336.61px;">200</div>
<div class="t tb" style="top:391.39px;font-size:9.8px;color:#9e9e38;font-weight:bold;right:284.11px;">0</div>
<div class="t tb" style="top:391.39px;font-size:9.8px;color:#2f9a2f;font-weight:bold;right:188.11px;">0</div>
<div class="t tb" style="top:405.03px;font-size:9.8px;color:#1e1e66;font-weight:bold;right:767.11px;">240</div>
<div class="t tb" style="top:405.03px;font-size:9.8px;color:#1a1a1a;font-weight:bold;letter-spacing:-0.188px;left:44.61px;">Head flying hours</div>
<div class="t tb" style="top:405.03px;font-size:9.8px;color:#2e8484;font-weight:bold;right:389.41px;">100</div>
<div class="t tb" style="top:405.03px;font-size:9.8px;color:#2e8484;font-weight:bold;right:336.61px;">253</div>
<div class="t tb" style="top:405.03px;font-size:9.8px;color:#9e9e38;font-weight:bold;right:284.11px;">0</div>
<div class="t tb" style="top:405.03px;font-size:9.8px;color:#6a2222;font-weight:bold;word-spacing:1.1px;right:188.11px;">13503 / 0 / 255</div>
<div class="t tb" style="top:418.67px;font-size:9.8px;color:#1e1e66;font-weight:bold;right:767.11px;">241</div>
<div class="t tb" style="top:418.67px;font-size:9.8px;color:#1a1a1a;font-weight:bold;letter-spacing:-0.033px;left:44.61px;">Total sectors write</div>
<div class="t tb" style="top:418.67px;font-size:9.8px;color:#2e8484;font-weight:bold;right:389.41px;">100</div>
<div class="t tb" style="top:418.67px;font-size:9.8px;color:#2e8484;font-weight:bold;right:336.61px;">253</div>
<div class="t tb" style="top:418.67px;font-size:9.8px;color:#9e9e38;font-weight:bold;right:284.11px;">0</div>
<div class="t tb" style="top:418.67px;font-size:9.8px;color:#6a2222;font-weight:bold;right:188.11px;">3913579881</div>
<div class="t tb" style="top:432.31px;font-size:9.8px;color:#1e1e66;font-weight:bold;right:767.11px;">242</div>
<div class="t tb" style="top:432.31px;font-size:9.8px;color:#1a1a1a;font-weight:bold;letter-spacing:-0.146px;left:44.61px;">Total LBA read</div>
<div class="t tb" style="top:432.31px;font-size:9.8px;color:#2e8484;font-weight:bold;right:389.41px;">100</div>
<div class="t tb" style="top:432.31px;font-size:9.8px;color:#2e8484;font-weight:bold;right:336.61px;">253</div>
<div class="t tb" style="top:432.31px;font-size:9.8px;color:#9e9e38;font-weight:bold;right:284.11px;">0</div>
<div class="t tb" style="top:432.31px;font-size:9.8px;color:#6a2222;font-weight:bold;right:188.11px;">3123030444</div>
<div class="t tb" style="top:445.95px;font-size:9.8px;color:#1e1e66;font-weight:bold;right:767.11px;">254</div>
<div class="t tb" style="top:445.95px;font-size:9.8px;color:#1a1a1a;font-weight:bold;letter-spacing:-0.476px;left:44.61px;">G-SENSOR shock counter</div>
<div class="t tb" style="top:445.95px;font-size:9.8px;color:#2e8484;font-weight:bold;right:389.41px;">100</div>
<div class="t tb" style="top:445.95px;font-size:9.8px;color:#2e8484;font-weight:bold;right:336.61px;">100</div>
<div class="t tb" style="top:445.95px;font-size:9.8px;color:#9e9e38;font-weight:bold;right:284.11px;">0</div>
<div class="t tb" style="top:445.95px;font-size:9.8px;color:#6a2222;font-weight:bold;right:188.11px;">0</div>
<div class="t" style="top:510.90px;font-size:10.0px;color:#222;letter-spacing:0.186px;left:38.80px;">Get S.M.A.R.T.</div>
<div class="t" style="top:510.70px;font-size:10.0px;color:#222;letter-spacing:0.068px;left:157.60px;">Status:</div>
<div class="t" style="top:510.70px;font-size:10.0px;color:#106010;letter-spacing:-0.627px;transform:scaleX(0.9325);transform-origin:0 0;left:204.60px;">GOOD</div>
<div class="t" style="top:510.70px;font-size:10.0px;color:#222;letter-spacing:-0.152px;transform:scaleX(0.9712);transform-origin:0 0;left:279.20px;">HEX raw values</div>
<div class="t" style="top:510.70px;font-size:10.0px;color:#222;letter-spacing:-0.078px;transform:scaleX(0.9842);transform-origin:0 0;left:602.60px;">IBM super smart:</div>
<div class="t" style="top:535.76px;font-size:10.3px;color:#222;letter-spacing:0.290px;left:8.34px;">18:45:04</div>
<div class="t" style="top:535.76px;font-size:10.3px;color:#222;letter-spacing:-0.046px;transform:scaleX(0.9902);transform-origin:0 0;left:63.59px;">Get drive passport... OK</div>
<div class="t" style="top:551.76px;font-size:10.3px;color:#222;letter-spacing:0.290px;left:8.34px;">18:45:04</div>
<div class="t" style="top:551.76px;font-size:10.3px;color:#222;letter-spacing:-0.071px;transform:scaleX(0.9871);transform-origin:0 0;left:63.59px;">Model: ST500LM034-2GH17A; Capacity 976773168 LBAs; SN: WN93KGSA; FW: 1001</div>
<div class="t" style="top:567.76px;font-size:10.3px;color:#222;letter-spacing:0.290px;left:8.34px;">18:45:07</div>
<div class="t" style="top:567.76px;font-size:10.3px;color:#222;letter-spacing:-0.023px;transform:scaleX(0.9956);transform-origin:0 0;left:63.59px;">Get S.M.A.R.T. command... OK</div>
<div class="t" style="top:583.76px;font-size:10.3px;color:#222;letter-spacing:0.290px;left:8.34px;">18:45:07</div>
<div class="t" style="top:583.76px;font-size:10.3px;color:#2a2aa0;letter-spacing:-0.122px;transform:scaleX(0.9794);transform-origin:0 0;left:63.59px;">SMART status = GOOD</div>
<div class="t" style="top:113.70px;font-size:10.0px;color:#8c8c8c;letter-spacing:-0.081px;transform:scaleX(0.9893);transform-origin:0 0;left:763.60px;">API</div>
<div class="t" style="top:131.70px;font-size:10.0px;color:#8c8c8c;letter-spacing:-0.359px;transform:scaleX(0.9544);transform-origin:0 0;left:763.60px;">PIO</div>
<div class="t" style="top:181.60px;font-size:10.8px;color:#222;letter-spacing:-0.095px;transform:scaleX(0.9856);transform-origin:0 0;left:756.57px;">Sleep</div>
<div class="t" style="top:231.60px;font-size:10.8px;color:#222;letter-spacing:-0.115px;transform:scaleX(0.9798);transform-origin:0 0;left:755.57px;">Recall</div>
<div class="t tb" style="top:433.08px;font-size:8.6px;color:#bdbdbd;font-weight:bold;letter-spacing:-0.640px;left:749.66px;">WR</div>
<div class="t tb" style="top:433.08px;font-size:8.6px;color:#bdbdbd;font-weight:bold;letter-spacing:1.266px;left:775.66px;">RD</div>
<div class="t" style="top:491.60px;font-size:10.8px;color:#222;letter-spacing:-0.269px;transform:scaleX(0.9617);transform-origin:0 0;left:756.57px;">Passp</div>
<div class="t" style="top:536.66px;font-size:10.3px;color:#222;letter-spacing:-0.120px;transform:scaleX(0.9832);transform-origin:0 0;left:762.09px;">Sound</div>
<div class="t" style="top:555.66px;font-size:10.3px;color:#222;letter-spacing:-0.081px;transform:scaleX(0.9856);transform-origin:0 0;left:762.09px;">Hints</div>
</body></html>
